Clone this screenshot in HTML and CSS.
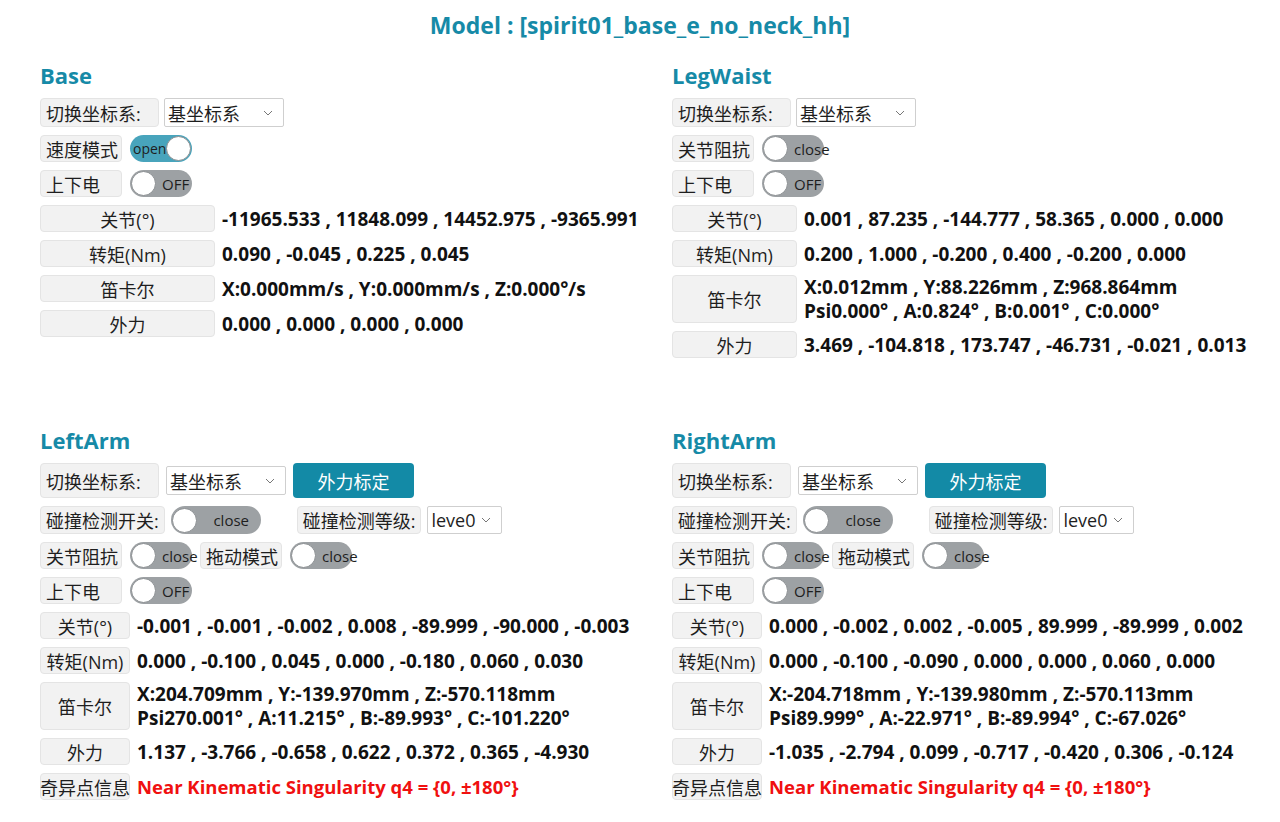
FILE: index.html
```html
<!DOCTYPE html>
<html lang="zh-CN">
<head>
  <meta charset="UTF-8">
  <meta name="viewport" content="width=device-width, initial-scale=1.0">
  <title>Model</title>
  <link rel="stylesheet" href="styles.css">
</head>
<body>
  <h1 class="title">Model : [spirit01_base_e_no_neck_hh]</h1>

  <div class="grid">
    <!-- Base -->
    <section class="part">
      <h2>Base</h2>
      <div class="row row-top">
        <span class="tag coord">切换坐标系:</span>
        <div class="select"><span>基坐标系</span><svg width="10" height="6" viewBox="0 0 10 6"><path d="M1 1l4 4 4-4" fill="none" stroke="#777" stroke-width="1"/></svg></div>
      </div>
      <div class="row">
        <span class="tag w4">速度模式</span>
        <div class="switch on"><span class="txt">open</span><span class="knob"></span></div>
      </div>
      <div class="row">
        <span class="tag w4">上下电</span>
        <div class="switch"><span class="knob"></span><span class="txt">OFF</span></div>
      </div>
      <div class="row data"><span class="tag key wide">关节(°)</span><span class="val">-11965.533 , 11848.099 , 14452.975 , -9365.991</span></div>
      <div class="row data"><span class="tag key wide">转矩(Nm)</span><span class="val">0.090 , -0.045 , 0.225 , 0.045</span></div>
      <div class="row data"><span class="tag key wide">笛卡尔</span><span class="val">X:0.000mm/s , Y:0.000mm/s , Z:0.000°/s</span></div>
      <div class="row data"><span class="tag key wide">外力</span><span class="val">0.000 , 0.000 , 0.000 , 0.000</span></div>
    </section>

    <!-- LegWaist -->
    <section class="part">
      <h2>LegWaist</h2>
      <div class="row row-top">
        <span class="tag coord">切换坐标系:</span>
        <div class="select"><span>基坐标系</span><svg width="10" height="6" viewBox="0 0 10 6"><path d="M1 1l4 4 4-4" fill="none" stroke="#777" stroke-width="1"/></svg></div>
      </div>
      <div class="row">
        <span class="tag w4">关节阻抗</span>
        <div class="switch"><span class="knob"></span><span class="txt">close</span></div>
      </div>
      <div class="row">
        <span class="tag w4">上下电</span>
        <div class="switch"><span class="knob"></span><span class="txt">OFF</span></div>
      </div>
      <div class="row data"><span class="tag key mid">关节(°)</span><span class="val">0.001 , 87.235 , -144.777 , 58.365 , 0.000 , 0.000</span></div>
      <div class="row data"><span class="tag key mid">转矩(Nm)</span><span class="val">0.200 , 1.000 , -0.200 , 0.400 , -0.200 , 0.000</span></div>
      <div class="row data tall"><span class="tag key mid">笛卡尔</span><span class="val lines"><span>X:0.012mm , Y:88.226mm , Z:968.864mm</span><span>Psi0.000° , A:0.824° , B:0.001° , C:0.000°</span></span></div>
      <div class="row data"><span class="tag key mid">外力</span><span class="val">3.469 , -104.818 , 173.747 , -46.731 , -0.021 , 0.013</span></div>
    </section>

    <!-- LeftArm -->
    <section class="part">
      <h2>LeftArm</h2>
      <div class="row row-arm">
        <span class="tag coord">切换坐标系:</span>
        <div class="select"><span>基坐标系</span><svg width="10" height="6" viewBox="0 0 10 6"><path d="M1 1l4 4 4-4" fill="none" stroke="#777" stroke-width="1"/></svg></div>
        <button class="btn">外力标定</button>
      </div>
      <div class="row row-col">
        <span class="tag">碰撞检测开关:</span>
        <div class="switch long"><span class="knob"></span><span class="txt">close</span></div>
        <span class="tag push">碰撞检测等级:</span>
        <div class="select small"><span>leve0</span><svg width="10" height="6" viewBox="0 0 10 6"><path d="M1 1l4 4 4-4" fill="none" stroke="#777" stroke-width="1"/></svg></div>
      </div>
      <div class="row">
        <span class="tag w4">关节阻抗</span>
        <div class="switch"><span class="knob"></span><span class="txt">close</span></div>
        <span class="tag w4">拖动模式</span>
        <div class="switch"><span class="knob"></span><span class="txt">close</span></div>
      </div>
      <div class="row">
        <span class="tag w4">上下电</span>
        <div class="switch"><span class="knob"></span><span class="txt">OFF</span></div>
      </div>
      <div class="row data"><span class="tag key">关节(°)</span><span class="val">-0.001 , -0.001 , -0.002 , 0.008 , -89.999 , -90.000 , -0.003</span></div>
      <div class="row data"><span class="tag key">转矩(Nm)</span><span class="val">0.000 , -0.100 , 0.045 , 0.000 , -0.180 , 0.060 , 0.030</span></div>
      <div class="row data tall"><span class="tag key">笛卡尔</span><span class="val lines"><span>X:204.709mm , Y:-139.970mm , Z:-570.118mm</span><span>Psi270.001° , A:11.215° , B:-89.993° , C:-101.220°</span></span></div>
      <div class="row data"><span class="tag key">外力</span><span class="val">1.137 , -3.766 , -0.658 , 0.622 , 0.372 , 0.365 , -4.930</span></div>
      <div class="row data"><span class="tag key">奇异点信息</span><span class="val warn">Near Kinematic Singularity q4 = {0, ±180°}</span></div>
    </section>

    <!-- RightArm -->
    <section class="part">
      <h2>RightArm</h2>
      <div class="row row-arm">
        <span class="tag coord">切换坐标系:</span>
        <div class="select"><span>基坐标系</span><svg width="10" height="6" viewBox="0 0 10 6"><path d="M1 1l4 4 4-4" fill="none" stroke="#777" stroke-width="1"/></svg></div>
        <button class="btn">外力标定</button>
      </div>
      <div class="row row-col">
        <span class="tag">碰撞检测开关:</span>
        <div class="switch long"><span class="knob"></span><span class="txt">close</span></div>
        <span class="tag push">碰撞检测等级:</span>
        <div class="select small"><span>leve0</span><svg width="10" height="6" viewBox="0 0 10 6"><path d="M1 1l4 4 4-4" fill="none" stroke="#777" stroke-width="1"/></svg></div>
      </div>
      <div class="row">
        <span class="tag w4">关节阻抗</span>
        <div class="switch"><span class="knob"></span><span class="txt">close</span></div>
        <span class="tag w4">拖动模式</span>
        <div class="switch"><span class="knob"></span><span class="txt">close</span></div>
      </div>
      <div class="row">
        <span class="tag w4">上下电</span>
        <div class="switch"><span class="knob"></span><span class="txt">OFF</span></div>
      </div>
      <div class="row data"><span class="tag key">关节(°)</span><span class="val">0.000 , -0.002 , 0.002 , -0.005 , 89.999 , -89.999 , 0.002</span></div>
      <div class="row data"><span class="tag key">转矩(Nm)</span><span class="val">0.000 , -0.100 , -0.090 , 0.000 , 0.000 , 0.060 , 0.000</span></div>
      <div class="row data tall"><span class="tag key">笛卡尔</span><span class="val lines"><span>X:-204.718mm , Y:-139.980mm , Z:-570.113mm</span><span>Psi89.999° , A:-22.971° , B:-89.994° , C:-67.026°</span></span></div>
      <div class="row data"><span class="tag key">外力</span><span class="val">-1.035 , -2.794 , 0.099 , -0.717 , -0.420 , 0.306 , -0.124</span></div>
      <div class="row data"><span class="tag key">奇异点信息</span><span class="val warn">Near Kinematic Singularity q4 = {0, ±180°}</span></div>
    </section>
  </div>
</body>
</html>
```

FILE: styles.css
```css
body {
  font-family: "Open Sans", "Noto Sans CJK SC", sans-serif;
  background-color: #ffffff;
  color: #1e1e1e;
  margin: 0;
  padding: 10px 40px 0;
}
.title {
  font-size: 23px;
  line-height: 30px;
  font-weight: 700;
  color: #168aa7;
  text-align: center;
  margin: 0 0 20px;
}
.grid {
  display: grid;
  grid-template-columns: 600px 600px;
  column-gap: 32px;
  row-gap: 67px;
}
.part {
  display: flex;
  flex-direction: column;
  gap: 8px;
}
.part h2 {
  font-size: 22px;
  line-height: 30px;
  font-weight: 700;
  color: #168aa7;
  margin: 0;
}
.row {
  display: flex;
  align-items: center;
  gap: 8px;
  height: 27px;
}
.row-top {
  height: 29px;
  gap: 5px;
}
.row-arm {
  height: 35px;
  gap: 7px;
}
.row-col {
  height: 28px;
  gap: 6px;
}
.tag {
  box-sizing: border-box;
  height: 100%;
  display: flex;
  align-items: center;
  padding: 0 5px;
  background: #f2f2f2;
  border: 1px solid #e4e4e4;
  border-radius: 4px;
  font-size: 18px;
  white-space: nowrap;
}
.tag.coord {
  width: 119px;
}
.tag.w4 {
  width: 82px;
}
.tag.key {
  justify-content: center;
  width: 90px;
}
.tag.key.wide {
  width: 175px;
}
.tag.key.mid {
  width: 125px;
}
.push {
  margin-left: 30px;
}
.select {
  box-sizing: border-box;
  width: 120px;
  height: 29px;
  border: 1px solid #cfcfcf;
  border-radius: 2px;
  background: #fff;
  display: flex;
  align-items: center;
  justify-content: space-between;
  padding: 0 10px 0 3px;
  font-size: 18px;
}
.select.small {
  width: 75px;
  height: 28px;
}
.btn {
  width: 121px;
  height: 35px;
  border: none;
  border-radius: 4px;
  background: #138aa6;
  color: #fff;
  font-family: inherit;
  font-size: 18px;
  padding: 0;
}
.switch {
  box-sizing: border-box;
  width: 62px;
  height: 27px;
  border-radius: 14px;
  background: #9da1a4;
  display: flex;
  align-items: center;
  padding: 0 1px;
  font-size: 14px;
  color: #1e1e1e;
}
.switch.on {
  background: #48a4bc;
  justify-content: space-between;
  padding-left: 3px;
}
.switch.long {
  width: 90px;
  height: 28px;
}
.switch.long .txt {
  flex: 1;
  text-align: center;
  font-size: 15px;
}
.knob {
  box-sizing: border-box;
  width: 25px;
  height: 25px;
  border-radius: 50%;
  background: #fff;
  border: 1px solid #8a8e91;
  flex-shrink: 0;
}
.switch .knob + .txt {
  margin-left: 6px;
  font-size: 15px;
}
.data {
  gap: 7px;
}
.data.tall {
  height: 48px;
}
.val {
  font-size: 19px;
  font-weight: 700;
  line-height: 24px;
  color: #111;
  white-space: nowrap;
}
.val.lines {
  display: flex;
  flex-direction: column;
}
.warn {
  font-size: 18.5px;
  color: #f01010;
}
```
